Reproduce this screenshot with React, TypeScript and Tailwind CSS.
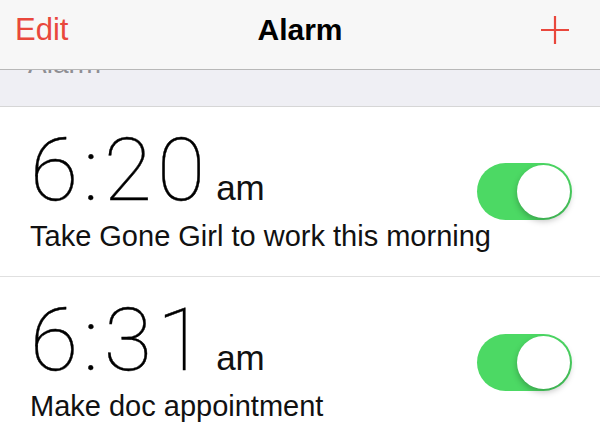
import React from 'react'

interface Alarm {
  time: string
  period: string
  label: string
  enabled: boolean
}

const alarms: Alarm[] = [
  { time: '6:20', period: 'am', label: 'Take Gone Girl to work this morning', enabled: true },
  { time: '6:31', period: 'am', label: 'Make doc appointment', enabled: true },
]

const Toggle: React.FC<{ on: boolean }> = ({ on }) => (
  <div
    className={`flex h-[57px] w-[95px] shrink-0 items-center rounded-full p-[2px] ${
      on ? 'justify-end bg-[#4cd964]' : 'justify-start bg-[#e5e5ea]'
    }`}
  >
    <div className="h-[53px] w-[53px] rounded-full bg-white shadow-[0_3px_6px_rgba(0,0,0,0.25)]" />
  </div>
)

const AlarmRow: React.FC<{ alarm: Alarm; last?: boolean }> = ({ alarm, last }) => (
  <div
    className={`flex h-[170px] items-center pl-[30px] pr-[28px] ${
      last ? '' : 'border-b border-[#e0e0e0]'
    }`}
  >
    <div className="flex min-w-0 flex-1 flex-col self-start pt-[19px]">
      <div className="flex items-baseline">
        <span className="font-['Roboto',sans-serif] text-[88px] font-thin leading-none tracking-[5px] text-black [-webkit-text-stroke:0.4px_#000]">
          {alarm.time}
        </span>
        <span className="ml-[6px] font-['Liberation_Sans',sans-serif] text-[35px] leading-none text-[#111]">
          {alarm.period}
        </span>
      </div>
      <div className="mt-[8px] whitespace-nowrap font-['Liberation_Sans',sans-serif] text-[29px] leading-none text-[#111]">
        {alarm.label}
      </div>
    </div>
    <Toggle on={alarm.enabled} />
  </div>
)

export default function App() {
  return (
    <div className="h-[425px] w-[600px] overflow-hidden bg-white font-['Liberation_Sans',sans-serif]">
      {/* navigation bar */}
      <div className="relative z-10 grid h-[70px] grid-cols-[1fr_auto_1fr] items-center border-b border-[#b8b8b8] bg-[#f7f7f7] px-[15px] pb-[10px]">
        <span className="justify-self-start text-[31px] leading-none text-[#e9473c]">Edit</span>
        <span className="text-[30px] font-bold leading-none text-black">Alarm</span>
        <svg width="30" height="30" viewBox="0 0 30 30" className="mr-[15px] justify-self-end text-[#e9473c]">
          <path d="M15 1v28M1 15h28" stroke="currentColor" strokeWidth="2.2" />
        </svg>
      </div>

      {/* grouped header, scrolled mostly under the bar */}
      <div className="relative flex h-[37px] flex-col overflow-hidden border-b border-[#d6d6d6] bg-[#efeff4] pl-[28px]">
        <div className="-mt-[20px] text-[28px] leading-[28px] text-[#8e8e93]">Alarm</div>
      </div>

      {alarms.map((a, i) => (
        <AlarmRow key={a.time} alarm={a} last={i === alarms.length - 1} />
      ))}
    </div>
  )
}
